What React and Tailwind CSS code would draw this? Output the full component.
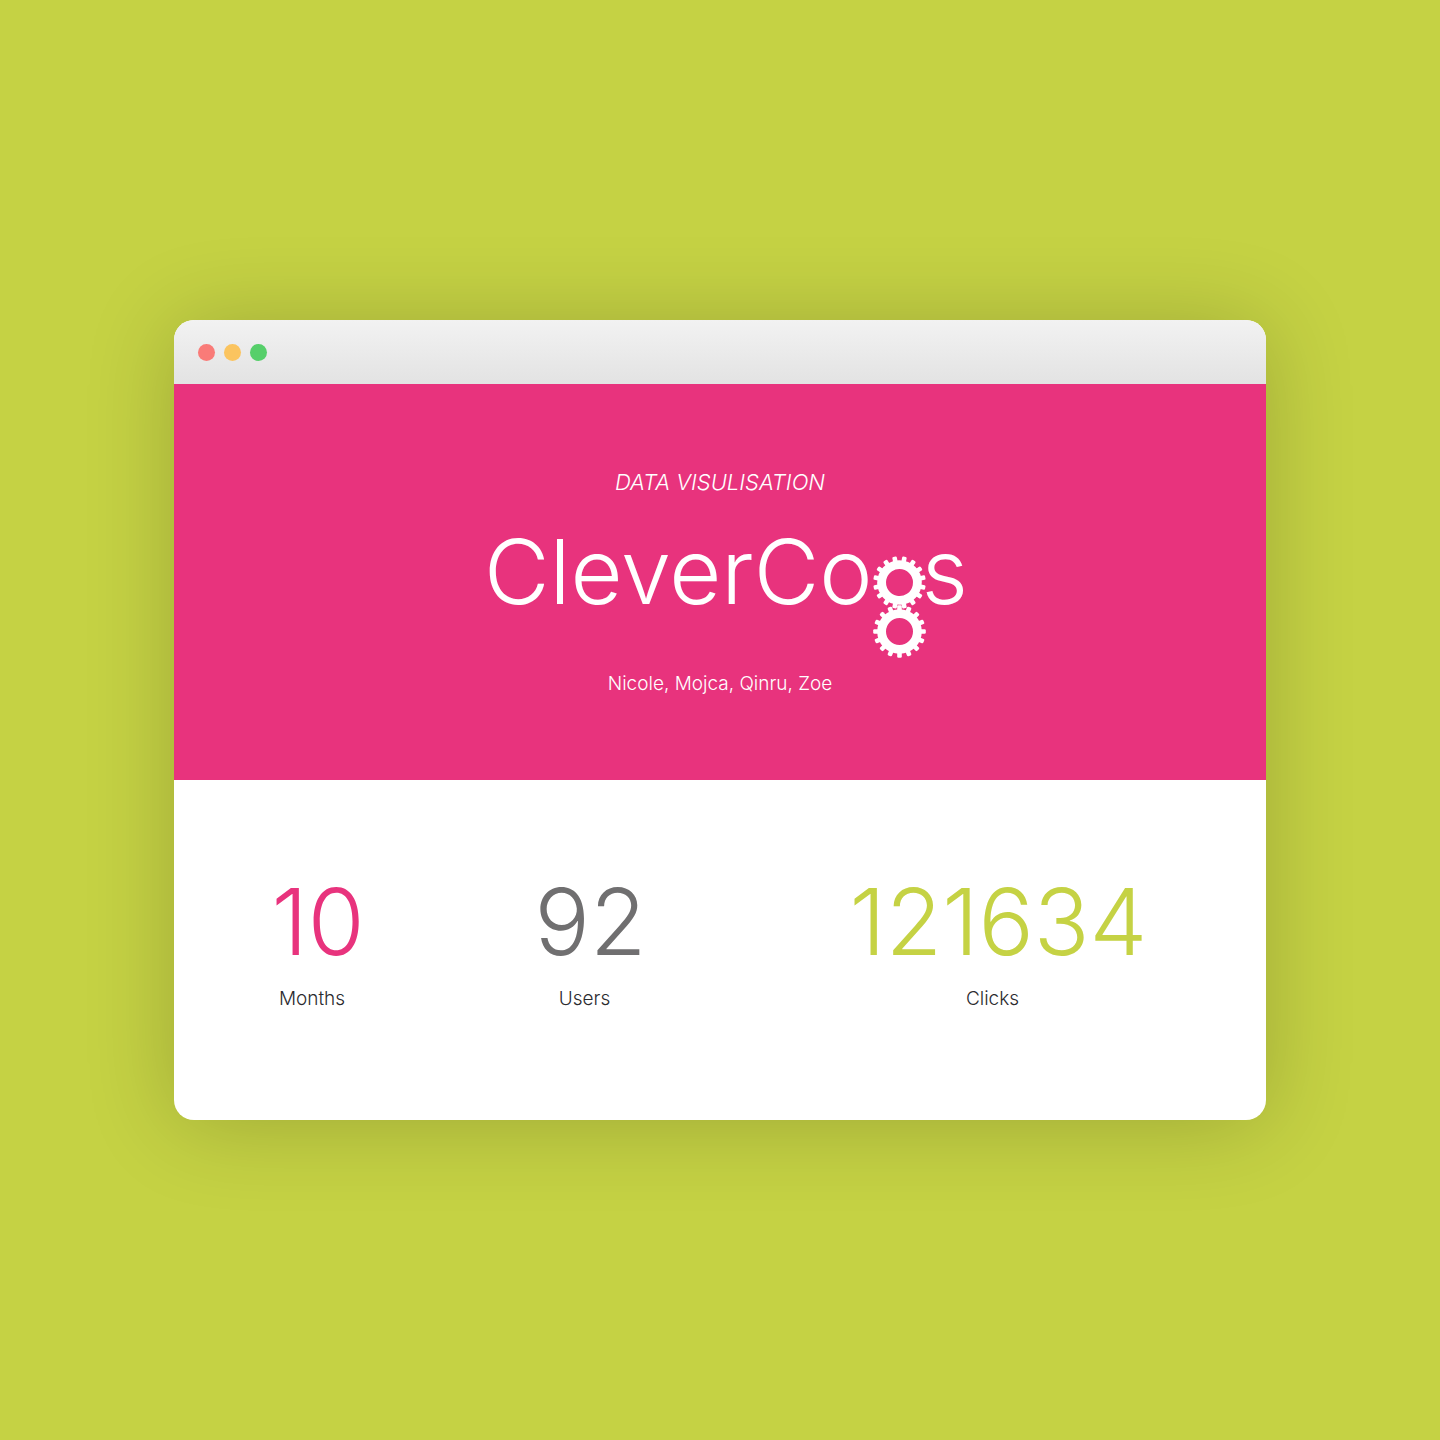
const TEETH = Array.from({ length: 16 }, (_, i) => i * 22.5);

function Gear({ cy, phase }) {
  return (
    <g transform={`translate(26.5 ${cy}) rotate(${phase})`}>
      <circle r="17.9" fill="none" stroke="currentColor" strokeWidth="8.8" />
      {TEETH.map((angle) => (
        <rect
          key={angle}
          x="-2.3"
          y="-26.3"
          width="4.6"
          height="7"
          rx="1.2"
          fill="currentColor"
          transform={`rotate(${angle})`}
        />
      ))}
    </g>
  );
}

function Logo() {
  return (
    <h1 className="mt-[30px] flex items-start pl-3 text-[90px] leading-[88px] font-light">
      <span>CleverCo</span>
      <svg
        role="img"
        aria-label="g"
        viewBox="0 0 53 102"
        className="mt-7 h-[102px] w-[53px] shrink-0"
      >
        <Gear cy={26.5} phase={11.25} />
        <Gear cy={75.5} phase={0} />
      </svg>
      <span className="-ml-1">s</span>
    </h1>
  );
}

function Stat({ value, label, color }) {
  return (
    <div className="flex flex-col-reverse items-center gap-[17px]">
      <dt className="text-[19px] leading-7 text-[#2b2b2f]">{label}</dt>
      <dd className={`pl-3 text-[92px] leading-[92px] ${color}`}>{value}</dd>
    </div>
  );
}

export default function App() {
  return (
    <main className="flex min-h-screen items-center justify-center bg-[#c5d244] px-8 py-16 font-['Inter',sans-serif] font-light">
      <article className="w-full max-w-[1092px] overflow-hidden rounded-[20px] bg-white shadow-[0_4px_90px_rgba(0,0,0,0.2)]">
        <div className="flex h-16 items-center gap-[9px] bg-linear-to-b from-[#f2f2f2] to-[#e3e3e3] px-6">
          <button type="button" aria-label="Close" className="size-[17px] rounded-full bg-[#f97b78]" />
          <button type="button" aria-label="Minimise" className="size-[17px] rounded-full bg-[#fbc45f]" />
          <button type="button" aria-label="Zoom" className="size-[17px] rounded-full bg-[#56cf6a]" />
        </div>

        <header className="flex flex-col items-center bg-[#e8337d] pt-[82px] pb-[82px] text-white">
          <p className="text-[22px] leading-8 italic">DATA VISULISATION</p>
          <Logo />
          <p className="mt-3 text-[19px] leading-7">Nicole, Mojca, Qinru, Zoe</p>
        </header>

        <dl className="grid grid-cols-[276fr_269fr_547fr] pt-24 pb-[107px]">
          <Stat value="10" label="Months" color="text-[#e8337d]" />
          <Stat value="92" label="Users" color="text-[#706f70]" />
          <Stat value="121634" label="Clicks" color="text-[#c5d244]" />
        </dl>
      </article>
    </main>
  );
}
